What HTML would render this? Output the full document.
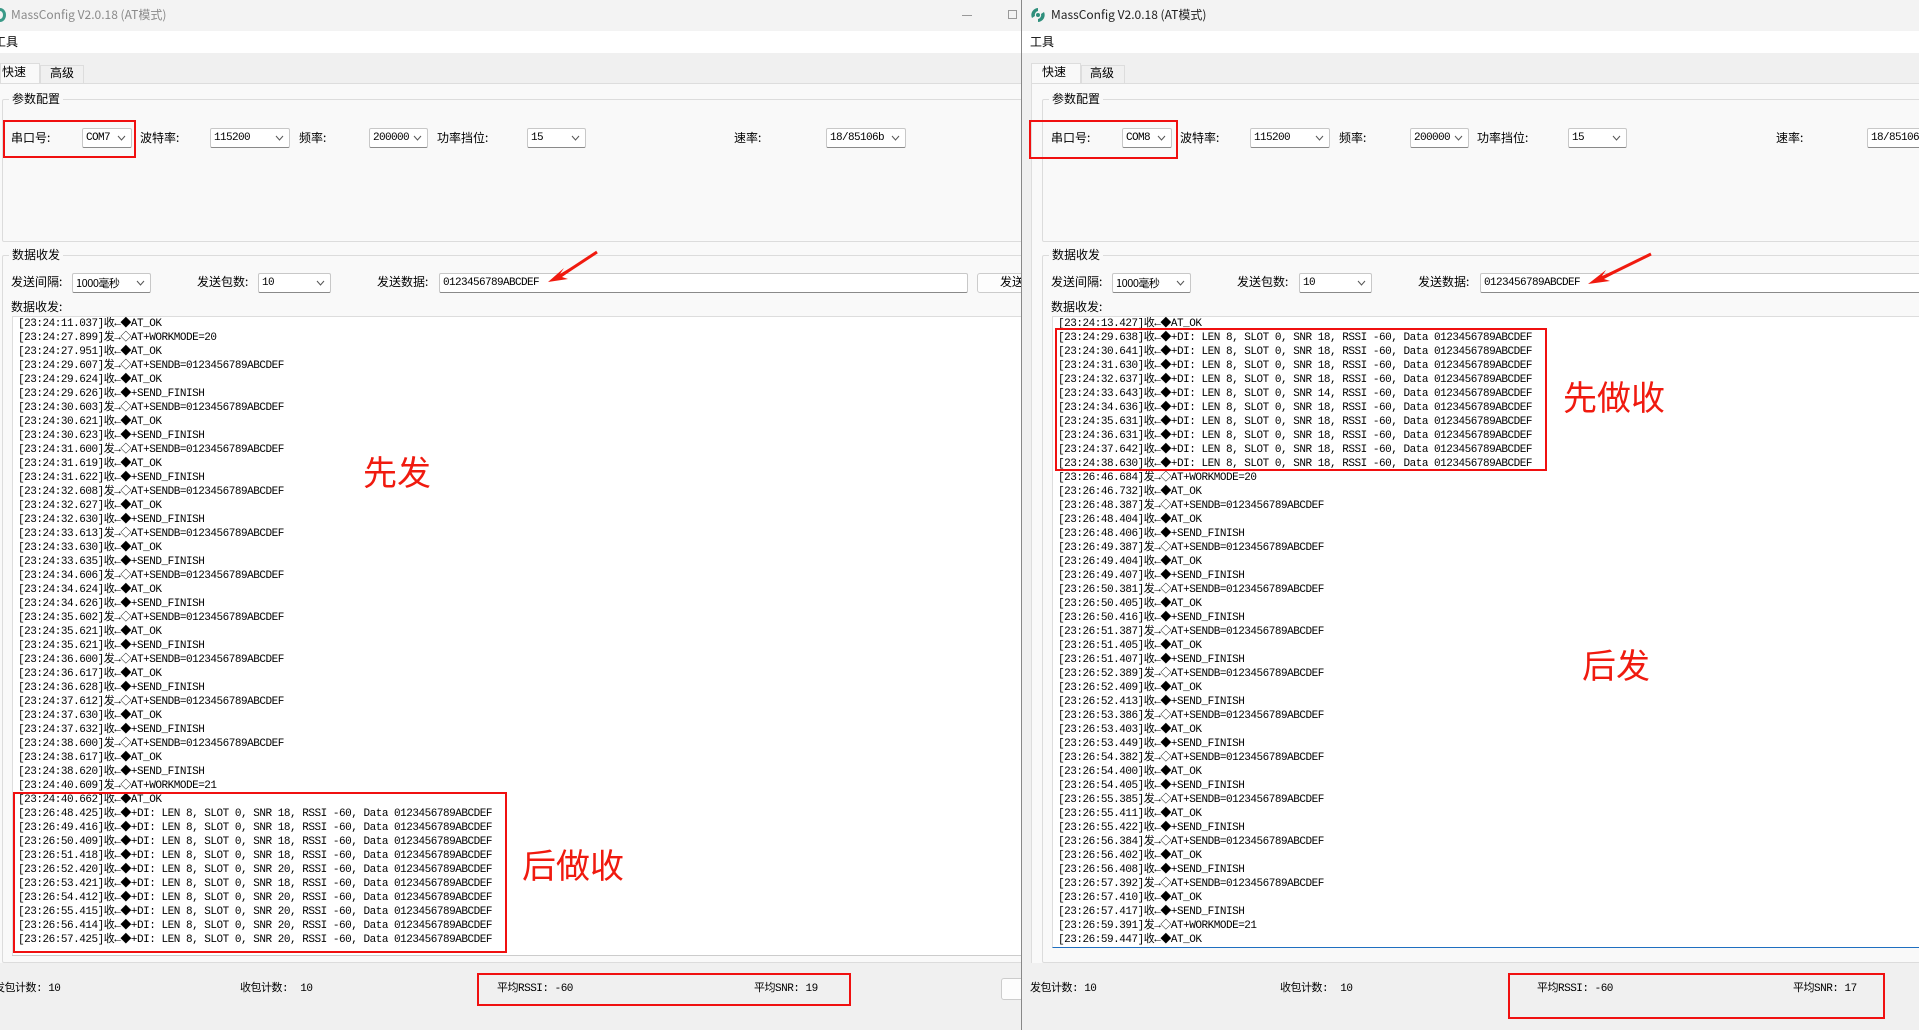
<!DOCTYPE html>
<html><head><meta charset="utf-8">
<style>
*{margin:0;padding:0;box-sizing:border-box}
body{width:1919px;height:1030px;overflow:hidden;background:#f0f0f0;position:relative;font-family:"Liberation Sans","Noto Sans CJK SC",sans-serif;font-size:12px;color:#000}
.a{position:absolute}
.ui{font-family:"Noto Sans CJK SC","WenQuanYi Zen Hei",sans-serif;font-size:12px;line-height:20px;white-space:nowrap}
.combo{position:absolute;height:20px;background:#fff;border:1px solid #c8c8c8;border-bottom-color:#8a8a8a;border-radius:2px;font-family:"Liberation Mono","Noto Sans CJK SC",monospace;font-size:11px;line-height:18px;padding-left:3px;letter-spacing:-0.6px;white-space:nowrap;overflow:hidden}
.combo svg{position:absolute;right:5px;top:6px}
.grp{position:absolute;border:1px solid #dcdcdc;border-radius:2px}
.glab{position:absolute;background:#f9f9f9;padding:0 3px;font-family:"Noto Sans CJK SC",sans-serif;font-size:12px;line-height:16px}
.log{position:absolute;background:#fff;font-family:"Liberation Mono","Noto Sans CJK SC",monospace;font-size:11px;line-height:14px;letter-spacing:-0.48px;white-space:pre;overflow:hidden;color:#000}
.red{position:absolute;border:2px solid #f01010}
.big{position:absolute;color:#f01a0f;font-family:"Noto Sans CJK SC",sans-serif;font-size:34px;line-height:36px;white-space:nowrap}
.st{position:absolute;font-family:"Liberation Mono","Noto Sans CJK SC",monospace;font-size:11px;letter-spacing:-0.5px;white-space:pre;line-height:14px}
</style></head><body>

<!-- ============ LEFT WINDOW ============ -->
<div class="a" style="left:0;top:0;width:1022px;height:31px;background:#f3f3f3"></div>
<div class="a" style="left:-6px;top:8px;width:12px;height:14px;border-radius:50%;border:3px solid #3a9a88"></div>
<div class="a ui" style="left:11px;top:5px;color:#8a8a8a;font-size:12px">MassConfig V2.0.18 (AT模式)</div>
<div class="a" style="left:962px;top:15px;width:10px;height:1px;background:#999"></div>
<div class="a" style="left:1008px;top:10px;width:9px;height:9px;border:1px solid #999"></div>
<div class="a" style="left:0;top:31px;width:1022px;height:22px;background:#fff"></div>
<div class="a ui" style="left:-6px;top:32px">工具</div>
<div class="a" style="left:0;top:53px;width:1022px;height:30px;background:#f0f0f0"></div>
<div class="a" style="left:0;top:63px;width:40px;height:21px;background:#f9f9f9;border:1px solid #ddd;border-bottom:none"></div>
<div class="a ui" style="left:2px;top:62px">快速</div>
<div class="a" style="left:40px;top:65px;width:44px;height:18px;background:#f0f0f0;border:1px solid #ddd;border-bottom:none"></div>
<div class="a ui" style="left:50px;top:63px">高级</div>
<div class="a" style="left:0;top:83px;width:1022px;height:880px;background:#f9f9f9;border-top:1px solid #ddd"></div>

<div class="grp" style="left:2px;top:99px;width:1030px;height:143px"></div>
<div class="glab" style="left:9px;top:91px">参数配置</div>
<div class="a ui" style="left:11px;top:128px">串口号:</div>
<div class="combo" style="left:82px;top:128px;width:50px">COM7<svg width="9" height="6"><path d="M1 1L4.5 5L8 1" stroke="#555" fill="none"/></svg></div>
<div class="a ui" style="left:140px;top:128px">波特率:</div>
<div class="combo" style="left:210px;top:128px;width:80px">115200<svg width="9" height="6"><path d="M1 1L4.5 5L8 1" stroke="#555" fill="none"/></svg></div>
<div class="a ui" style="left:299px;top:128px">频率:</div>
<div class="combo" style="left:369px;top:128px;width:59px">200000<svg width="9" height="6"><path d="M1 1L4.5 5L8 1" stroke="#555" fill="none"/></svg></div>
<div class="a ui" style="left:437px;top:128px">功率挡位:</div>
<div class="combo" style="left:527px;top:128px;width:59px">15<svg width="9" height="6"><path d="M1 1L4.5 5L8 1" stroke="#555" fill="none"/></svg></div>
<div class="a ui" style="left:734px;top:128px">速率:</div>
<div class="combo" style="left:826px;top:128px;width:80px">18/85106b<svg width="9" height="6"><path d="M1 1L4.5 5L8 1" stroke="#555" fill="none"/></svg></div>
<div class="red" style="left:3px;top:120px;width:133px;height:38px"></div>

<div class="grp" style="left:2px;top:255px;width:1030px;height:708px"></div>
<div class="glab" style="left:9px;top:247px">数据收发</div>
<div class="a ui" style="left:11px;top:272px">发送间隔:</div>
<div class="combo" style="left:72px;top:273px;width:79px;font-family:'Noto Sans CJK SC',sans-serif;letter-spacing:-0.5px">1000毫秒<svg width="9" height="6"><path d="M1 1L4.5 5L8 1" stroke="#555" fill="none"/></svg></div>
<div class="a ui" style="left:197px;top:272px">发送包数:</div>
<div class="combo" style="left:258px;top:273px;width:73px">10<svg width="9" height="6"><path d="M1 1L4.5 5L8 1" stroke="#555" fill="none"/></svg></div>
<div class="a ui" style="left:377px;top:272px">发送数据:</div>
<div class="combo" style="left:439px;top:273px;width:529px">0123456789ABCDEF</div>
<div class="a" style="left:977px;top:273px;width:60px;height:20px;background:#fdfdfd;border:1px solid #ccc;border-radius:3px"></div>
<div class="a ui" style="left:1000px;top:272px">发送</div>
<div class="a ui" style="left:11px;top:297px">数据收发:</div>
<svg class="a" style="left:540px;top:248px" width="64" height="38"><path d="M57 4 L20 26 L24 20 L8 34 L28 31 L22 29 Z" fill="#f01a0f"/><path d="M57 4 L22 27" stroke="#f01a0f" stroke-width="3"/></svg>

<div class="log" style="left:12px;top:316px;width:1010px;height:640px;padding-left:5px;border-left:1px solid #ddd;border-top:1px solid #ddd">[23:24:11.037]收←◆AT_OK
[23:24:27.899]发→◇AT+WORKMODE=20
[23:24:27.951]收←◆AT_OK
[23:24:29.607]发→◇AT+SENDB=0123456789ABCDEF
[23:24:29.624]收←◆AT_OK
[23:24:29.626]收←◆+SEND_FINISH
[23:24:30.603]发→◇AT+SENDB=0123456789ABCDEF
[23:24:30.621]收←◆AT_OK
[23:24:30.623]收←◆+SEND_FINISH
[23:24:31.600]发→◇AT+SENDB=0123456789ABCDEF
[23:24:31.619]收←◆AT_OK
[23:24:31.622]收←◆+SEND_FINISH
[23:24:32.608]发→◇AT+SENDB=0123456789ABCDEF
[23:24:32.627]收←◆AT_OK
[23:24:32.630]收←◆+SEND_FINISH
[23:24:33.613]发→◇AT+SENDB=0123456789ABCDEF
[23:24:33.630]收←◆AT_OK
[23:24:33.635]收←◆+SEND_FINISH
[23:24:34.606]发→◇AT+SENDB=0123456789ABCDEF
[23:24:34.624]收←◆AT_OK
[23:24:34.626]收←◆+SEND_FINISH
[23:24:35.602]发→◇AT+SENDB=0123456789ABCDEF
[23:24:35.621]收←◆AT_OK
[23:24:35.621]收←◆+SEND_FINISH
[23:24:36.600]发→◇AT+SENDB=0123456789ABCDEF
[23:24:36.617]收←◆AT_OK
[23:24:36.628]收←◆+SEND_FINISH
[23:24:37.612]发→◇AT+SENDB=0123456789ABCDEF
[23:24:37.630]收←◆AT_OK
[23:24:37.632]收←◆+SEND_FINISH
[23:24:38.600]发→◇AT+SENDB=0123456789ABCDEF
[23:24:38.617]收←◆AT_OK
[23:24:38.620]收←◆+SEND_FINISH
[23:24:40.609]发→◇AT+WORKMODE=21
[23:24:40.662]收←◆AT_OK
[23:26:48.425]收←◆+DI: LEN 8, SLOT 0, SNR 18, RSSI -60, Data 0123456789ABCDEF
[23:26:49.416]收←◆+DI: LEN 8, SLOT 0, SNR 18, RSSI -60, Data 0123456789ABCDEF
[23:26:50.409]收←◆+DI: LEN 8, SLOT 0, SNR 18, RSSI -60, Data 0123456789ABCDEF
[23:26:51.418]收←◆+DI: LEN 8, SLOT 0, SNR 18, RSSI -60, Data 0123456789ABCDEF
[23:26:52.420]收←◆+DI: LEN 8, SLOT 0, SNR 20, RSSI -60, Data 0123456789ABCDEF
[23:26:53.421]收←◆+DI: LEN 8, SLOT 0, SNR 18, RSSI -60, Data 0123456789ABCDEF
[23:26:54.412]收←◆+DI: LEN 8, SLOT 0, SNR 20, RSSI -60, Data 0123456789ABCDEF
[23:26:55.415]收←◆+DI: LEN 8, SLOT 0, SNR 20, RSSI -60, Data 0123456789ABCDEF
[23:26:56.414]收←◆+DI: LEN 8, SLOT 0, SNR 20, RSSI -60, Data 0123456789ABCDEF
[23:26:57.425]收←◆+DI: LEN 8, SLOT 0, SNR 20, RSSI -60, Data 0123456789ABCDEF</div>
<div class="a" style="left:12px;top:955px;width:1010px;height:1px;background:#ccc"></div>
<div class="red" style="left:13px;top:792px;width:494px;height:161px"></div>
<div class="big" style="left:363px;top:453px">先发</div>
<div class="big" style="left:522px;top:846px">后做收</div>

<div class="a" style="left:0;top:963px;width:1022px;height:67px;background:#f0f0f0"></div>
<div class="st" style="left:-6px;top:982px">发包计数: 10</div>
<div class="st" style="left:240px;top:982px">收包计数:  10</div>
<div class="st" style="left:497px;top:982px">平均RSSI: -60</div>
<div class="st" style="left:754px;top:982px">平均SNR: 19</div>
<div class="red" style="left:477px;top:973px;width:374px;height:33px"></div>
<div class="a" style="left:1001px;top:978px;width:30px;height:22px;background:#fdfdfd;border:1px solid #ccc;border-radius:3px"></div>

<!-- ============ RIGHT WINDOW ============ -->
<div class="a" style="left:1021px;top:0;width:1px;height:1030px;background:#888"></div>
<div class="a" style="left:1022px;top:0;width:897px;height:31px;background:#f3f3f3"></div>
<svg class="a" style="left:1030px;top:7px" width="16" height="16"><path d="M8 1 A7 7 0 0 0 2 11 L5 9 A4 4 0 0 1 8 4 Z" fill="#2f8f7c"/><path d="M8 15 A7 7 0 0 0 14 5 L11 7 A4 4 0 0 1 8 12 Z" fill="#2f8f7c"/><circle cx="8" cy="8" r="2" fill="#2f8f7c"/></svg>
<div class="a ui" style="left:1051px;top:5px;color:#222">MassConfig V2.0.18 (AT模式)</div>
<div class="a" style="left:1022px;top:31px;width:897px;height:22px;background:#fff"></div>
<div class="a ui" style="left:1030px;top:32px">工具</div>
<div class="a" style="left:1022px;top:53px;width:897px;height:977px;background:#f0f0f0"></div>
<div class="a" style="left:1031px;top:63px;width:50px;height:21px;background:#f9f9f9;border:1px solid #ddd;border-bottom:none"></div>
<div class="a ui" style="left:1042px;top:62px">快速</div>
<div class="a" style="left:1081px;top:65px;width:44px;height:18px;background:#f0f0f0;border:1px solid #ddd;border-bottom:none"></div>
<div class="a ui" style="left:1090px;top:63px">高级</div>
<div class="a" style="left:1031px;top:83px;width:888px;height:880px;background:#f9f9f9;border-top:1px solid #ddd;border-left:1px solid #ddd"></div>

<div class="grp" style="left:1042px;top:99px;width:890px;height:143px"></div>
<div class="glab" style="left:1049px;top:91px">参数配置</div>
<div class="a ui" style="left:1051px;top:128px">串口号:</div>
<div class="combo" style="left:1122px;top:128px;width:50px">COM8<svg width="9" height="6"><path d="M1 1L4.5 5L8 1" stroke="#555" fill="none"/></svg></div>
<div class="a ui" style="left:1180px;top:128px">波特率:</div>
<div class="combo" style="left:1250px;top:128px;width:80px">115200<svg width="9" height="6"><path d="M1 1L4.5 5L8 1" stroke="#555" fill="none"/></svg></div>
<div class="a ui" style="left:1339px;top:128px">频率:</div>
<div class="combo" style="left:1410px;top:128px;width:59px">200000<svg width="9" height="6"><path d="M1 1L4.5 5L8 1" stroke="#555" fill="none"/></svg></div>
<div class="a ui" style="left:1477px;top:128px">功率挡位:</div>
<div class="combo" style="left:1568px;top:128px;width:59px">15<svg width="9" height="6"><path d="M1 1L4.5 5L8 1" stroke="#555" fill="none"/></svg></div>
<div class="a ui" style="left:1776px;top:128px">速率:</div>
<div class="combo" style="left:1867px;top:128px;width:80px">18/85106b</div>
<div class="red" style="left:1029px;top:120px;width:149px;height:39px"></div>

<div class="grp" style="left:1042px;top:255px;width:890px;height:708px"></div>
<div class="glab" style="left:1049px;top:247px">数据收发</div>
<div class="a ui" style="left:1051px;top:272px">发送间隔:</div>
<div class="combo" style="left:1112px;top:273px;width:79px;font-family:'Noto Sans CJK SC',sans-serif;letter-spacing:-0.5px">1000毫秒<svg width="9" height="6"><path d="M1 1L4.5 5L8 1" stroke="#555" fill="none"/></svg></div>
<div class="a ui" style="left:1237px;top:272px">发送包数:</div>
<div class="combo" style="left:1299px;top:273px;width:73px">10<svg width="9" height="6"><path d="M1 1L4.5 5L8 1" stroke="#555" fill="none"/></svg></div>
<div class="a ui" style="left:1418px;top:272px">发送数据:</div>
<div class="combo" style="left:1480px;top:273px;width:450px">0123456789ABCDEF</div>
<div class="a ui" style="left:1051px;top:297px">数据收发:</div>
<svg class="a" style="left:1580px;top:250px" width="76" height="38"><path d="M71 4 L22 26 L26 20 L8 34 L30 31 L24 29 Z" fill="#f01a0f"/><path d="M71 4 L24 27" stroke="#f01a0f" stroke-width="3"/></svg>

<div class="log" style="left:1052px;top:316px;width:867px;height:632px;padding-left:5px;border-left:1px solid #ddd;border-top:1px solid #ddd;border-bottom:1px solid #1f6fc0">[23:24:13.427]收←◆AT_OK
[23:24:29.638]收←◆+DI: LEN 8, SLOT 0, SNR 18, RSSI -60, Data 0123456789ABCDEF
[23:24:30.641]收←◆+DI: LEN 8, SLOT 0, SNR 18, RSSI -60, Data 0123456789ABCDEF
[23:24:31.630]收←◆+DI: LEN 8, SLOT 0, SNR 18, RSSI -60, Data 0123456789ABCDEF
[23:24:32.637]收←◆+DI: LEN 8, SLOT 0, SNR 18, RSSI -60, Data 0123456789ABCDEF
[23:24:33.643]收←◆+DI: LEN 8, SLOT 0, SNR 14, RSSI -60, Data 0123456789ABCDEF
[23:24:34.636]收←◆+DI: LEN 8, SLOT 0, SNR 18, RSSI -60, Data 0123456789ABCDEF
[23:24:35.631]收←◆+DI: LEN 8, SLOT 0, SNR 18, RSSI -60, Data 0123456789ABCDEF
[23:24:36.631]收←◆+DI: LEN 8, SLOT 0, SNR 18, RSSI -60, Data 0123456789ABCDEF
[23:24:37.642]收←◆+DI: LEN 8, SLOT 0, SNR 18, RSSI -60, Data 0123456789ABCDEF
[23:24:38.630]收←◆+DI: LEN 8, SLOT 0, SNR 18, RSSI -60, Data 0123456789ABCDEF
[23:26:46.684]发→◇AT+WORKMODE=20
[23:26:46.732]收←◆AT_OK
[23:26:48.387]发→◇AT+SENDB=0123456789ABCDEF
[23:26:48.404]收←◆AT_OK
[23:26:48.406]收←◆+SEND_FINISH
[23:26:49.387]发→◇AT+SENDB=0123456789ABCDEF
[23:26:49.404]收←◆AT_OK
[23:26:49.407]收←◆+SEND_FINISH
[23:26:50.381]发→◇AT+SENDB=0123456789ABCDEF
[23:26:50.405]收←◆AT_OK
[23:26:50.416]收←◆+SEND_FINISH
[23:26:51.387]发→◇AT+SENDB=0123456789ABCDEF
[23:26:51.405]收←◆AT_OK
[23:26:51.407]收←◆+SEND_FINISH
[23:26:52.389]发→◇AT+SENDB=0123456789ABCDEF
[23:26:52.409]收←◆AT_OK
[23:26:52.413]收←◆+SEND_FINISH
[23:26:53.386]发→◇AT+SENDB=0123456789ABCDEF
[23:26:53.403]收←◆AT_OK
[23:26:53.449]收←◆+SEND_FINISH
[23:26:54.382]发→◇AT+SENDB=0123456789ABCDEF
[23:26:54.400]收←◆AT_OK
[23:26:54.405]收←◆+SEND_FINISH
[23:26:55.385]发→◇AT+SENDB=0123456789ABCDEF
[23:26:55.411]收←◆AT_OK
[23:26:55.422]收←◆+SEND_FINISH
[23:26:56.384]发→◇AT+SENDB=0123456789ABCDEF
[23:26:56.402]收←◆AT_OK
[23:26:56.408]收←◆+SEND_FINISH
[23:26:57.392]发→◇AT+SENDB=0123456789ABCDEF
[23:26:57.410]收←◆AT_OK
[23:26:57.417]收←◆+SEND_FINISH
[23:26:59.391]发→◇AT+WORKMODE=21
[23:26:59.447]收←◆AT_OK</div>
<div class="red" style="left:1055px;top:328px;width:492px;height:143px"></div>
<div class="big" style="left:1563px;top:378px">先做收</div>
<div class="big" style="left:1582px;top:646px">后发</div>

<div class="a" style="left:1022px;top:963px;width:897px;height:67px;background:#f0f0f0"></div>
<div class="st" style="left:1030px;top:982px">发包计数: 10</div>
<div class="st" style="left:1280px;top:982px">收包计数:  10</div>
<div class="st" style="left:1537px;top:982px">平均RSSI: -60</div>
<div class="st" style="left:1793px;top:982px">平均SNR: 17</div>
<div class="red" style="left:1508px;top:973px;width:377px;height:46px"></div>
</body></html>
